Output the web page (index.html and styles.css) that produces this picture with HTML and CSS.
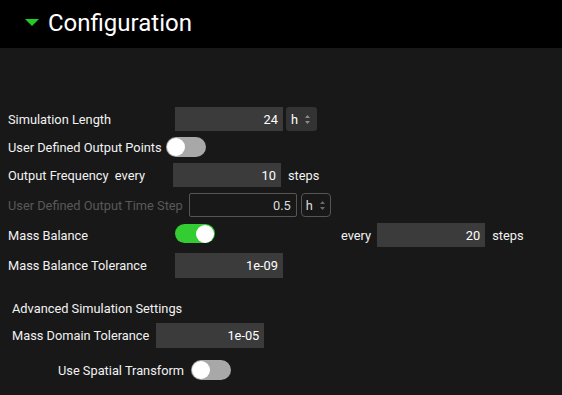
FILE: index.html
```html
<!DOCTYPE html>
<html lang="en">
<head>
    <meta charset="UTF-8">
    <meta name="viewport" content="width=device-width, initial-scale=1.0">
    <title>Configuration</title>
    <link rel="stylesheet" href="styles.css">
</head>
<body>
    <div class="panel-header">
        <span class="caret"></span>
        <h1>Configuration</h1>
    </div>

    <div class="config">
        <div class="row">
            <span class="label fixed">Simulation Length</span>
            <div class="field">24</div>
            <div class="unit">h <svg class="spin" width="7" height="11" viewBox="0 0 7 11"><path d="M3.5 1 L6 4 H1 Z M3.5 10 L6 7 H1 Z" fill="#8a8a8a"/></svg></div>
        </div>

        <div class="row short">
            <span class="label tight">User Defined Output Points</span>
            <span class="toggle"></span>
        </div>

        <div class="row">
            <span class="label freq">Output Frequency&nbsp; every</span>
            <div class="field">10</div>
            <span class="after">steps</span>
        </div>

        <div class="row disabled">
            <span class="label">User Defined Output Time Step</span>
            <div class="field">0.5</div>
            <div class="unit">h <svg class="spin" width="7" height="11" viewBox="0 0 7 11"><path d="M3.5 1 L6 4 H1 Z M3.5 10 L6 7 H1 Z" fill="#6a6a6a"/></svg></div>
        </div>

        <div class="row">
            <span class="label fixed">Mass Balance</span>
            <div class="toggle-cell"><span class="toggle on"></span></div>
            <span class="label">every</span>
            <div class="field">20</div>
            <span class="after">steps</span>
        </div>

        <div class="row tall">
            <span class="label fixed">Mass Balance Tolerance</span>
            <div class="field">1e-09</div>
        </div>

        <div class="advanced">
            <div class="section-title">Advanced Simulation Settings</div>
            <div class="row tall">
                <span class="label wide">Mass Domain Tolerance</span>
                <div class="field">1e-05</div>
            </div>
            <div class="row short indent">
                <span class="label wide">Use Spatial Transform</span>
                <span class="toggle"></span>
            </div>
        </div>
    </div>
</body>
</html>
```

FILE: styles.css
```css
body {
    font-family: 'Roboto', 'Liberation Sans', sans-serif;
    margin: 0;
    padding: 0;
    background: #181818;
    color: #f2f2f2;
    font-size: 12.8px;
    height: 395px;
    overflow: hidden;
}

.panel-header {
    background: #000;
    height: 48px;
    display: flex;
    align-items: center;
    padding-left: 25px;
}

.caret {
    width: 0;
    height: 0;
    border-left: 7px solid transparent;
    border-right: 7px solid transparent;
    border-top: 7px solid #22cc22;
    margin-right: 9px;
    margin-top: -3px;
}

.panel-header h1 {
    margin: 0;
    font-size: 24px;
    font-weight: 400;
    color: #fff;
    margin-top: -2px;
}

.config {
    display: flex;
    flex-direction: column;
    gap: 6px;
    padding: 59px 0 0 8px;
}

.row {
    display: flex;
    align-items: center;
    height: 24px;
}

.row.short {
    height: 20px;
}

.row.tall {
    height: 25px;
}

.label {
    white-space: nowrap;
    margin-right: 6px;
}

.label.tight {
    margin-right: 4px;
}

.label.wide {
    margin-right: 7px;
}

.label.fixed {
    width: 167px;
    margin-right: 0;
}

.label.freq {
    width: 165px;
    margin-right: 0;
}

.field {
    width: 108px;
    height: 100%;
    box-sizing: border-box;
    background: #3b3b3b;
    padding-right: 5px;
    display: flex;
    align-items: center;
    justify-content: flex-end;
    color: #fff;
}

.unit {
    width: 31px;
    height: 100%;
    box-sizing: border-box;
    margin-left: 3px;
    background: #333;
    border-radius: 3px;
    display: flex;
    align-items: center;
    padding-left: 5px;
    gap: 6px;
    color: #fff;
}

.after {
    margin-left: 7px;
}

.toggle {
    position: relative;
    display: inline-block;
    width: 40px;
    height: 20px;
    border-radius: 10px;
    background: #a8a8a8;
}

.toggle::after {
    content: "";
    position: absolute;
    top: 1px;
    left: 1px;
    width: 18px;
    height: 18px;
    border-radius: 50%;
    background: #fff;
}

.toggle.on {
    background: #33cc33;
    height: 19px;
}

.toggle.on::after {
    left: auto;
    right: 1px;
    top: 0.5px;
}

.toggle-cell {
    width: 166px;
}

.disabled .label {
    color: #595959;
    margin-right: 6px;
}

.disabled .field {
    background: transparent;
    border: 1px solid #555;
    border-radius: 2px;
    color: #ddd;
}

.disabled .unit {
    background: transparent;
    border: 1px solid #555;
    border-radius: 4px;
    width: 30px;
    margin-left: 4px;
    padding-left: 4px;
    color: #ddd;
}

.advanced {
    display: flex;
    flex-direction: column;
    padding-left: 4px;
    margin-top: 16px;
}

.section-title {
    height: 18px;
    line-height: 18px;
    margin-bottom: 5px;
}

.advanced .row.short {
    margin-top: 12px;
}

.indent {
    padding-left: 46px;
}
```
